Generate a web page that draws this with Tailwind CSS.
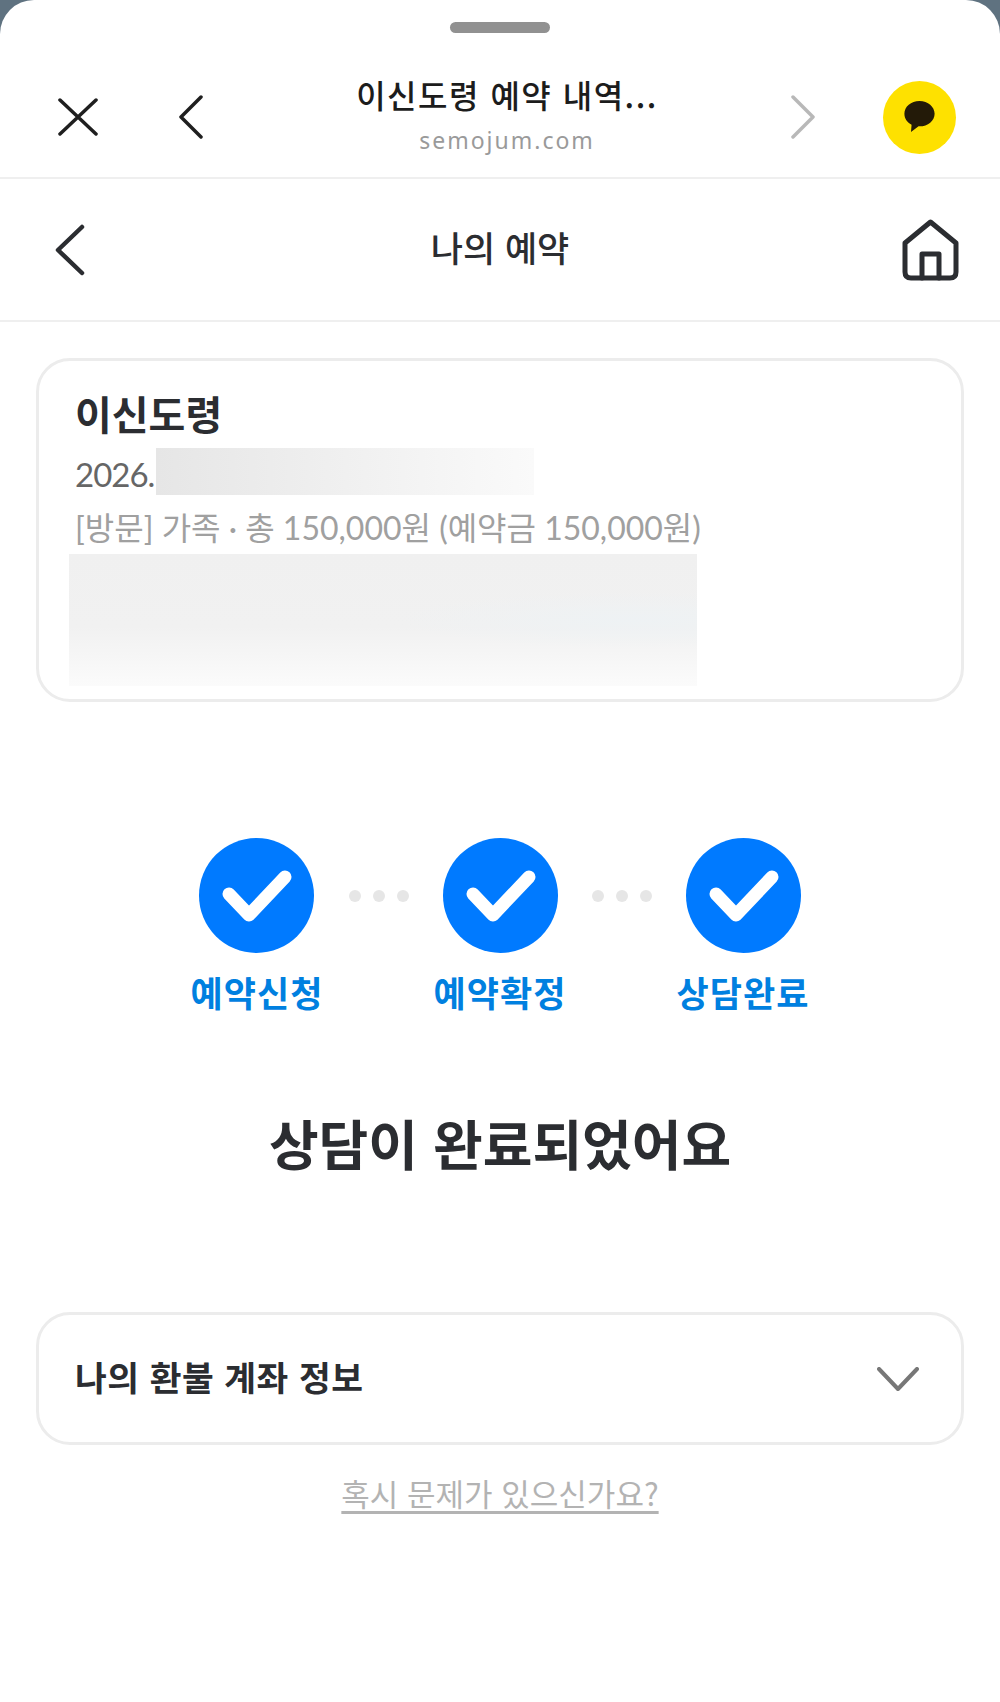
<!DOCTYPE html>
<html lang="ko">
<head>
    <meta charset="UTF-8">
    <title>나의 예약</title>
    <script src="https://cdn.jsdelivr.net/npm/@tailwindcss/browser@4"></script>
</head>
<body class="bg-[#5f7280] font-['Noto_Sans_CJK_KR',sans-serif]">
<div class="w-[1000px] h-[1702px] bg-white rounded-t-[34px] overflow-hidden">
    <!-- 카카오 브라우저 시트 -->
    <div class="h-[177px] pt-[22px]">
        <div class="w-[100px] h-[11px] mx-auto rounded-full bg-[#919191]"></div>
        <div class="flex items-center h-[144px] pt-[24px] pl-[58px] pr-[44px]">
            <svg class="w-[40px] h-[38px]" viewBox="0 0 40 38" fill="none" stroke="#1f1f1f" stroke-width="3.5" stroke-linecap="round"><path d="M2 2 38 36M38 2 2 36"/></svg>
            <svg class="w-[26px] h-[44px] ml-[80px]" viewBox="0 0 26 44" fill="none" stroke="#1f1f1f" stroke-width="3.5" stroke-linecap="round" stroke-linejoin="round"><path d="M23 2 3 22l20 20"/></svg>
            <div class="flex-1 flex flex-col items-center pl-[20px] pb-[6px]">
                <div class="text-[32px] leading-[40px] font-medium text-[#1c1c1c] tracking-[1.500px] whitespace-nowrap">이신도령 예약 내역...</div>
                <div class="text-[23px] leading-[30px] mt-[11px] text-[#9a9a9a] tracking-[2px] font-['Noto_Sans',sans-serif]">semojum.com</div>
            </div>
            <svg class="w-[26px] h-[44px] mr-[67px]" viewBox="0 0 26 44" fill="none" stroke="#b8b8b8" stroke-width="3.5" stroke-linecap="round" stroke-linejoin="round"><path d="m3 2 20 20L3 42"/></svg>
            <div class="w-[73px] h-[73px] rounded-full bg-[#fee100] flex items-center justify-center">
                <svg class="w-[33px] h-[34px]" viewBox="0 0 34 36"><path fill="#231a08" d="M17 1C8 1 1 7 1 14.500c0 5 3 9.300 7.600 11.600L8 34l8-6.100h1c9 0 16-6 16-13.400S26 1 17 1Z"/></svg>
            </div>
        </div>
    </div>
    <!-- 상단 바 -->
    <div class="h-[145px] border-y-2 border-[#efefef] grid grid-cols-[60px_1fr_60px] items-center px-[41px]">
        <svg class="w-[30px] h-[52px] ml-[14px]" viewBox="0 0 30 52" fill="none" stroke="#2b2d31" stroke-width="4.500" stroke-linecap="round" stroke-linejoin="round"><path d="M27 3 3 26l24 23"/></svg>
        <div class="text-center text-[35px] leading-[44px] mb-[6px] font-medium text-[#2b2d31]">나의 예약</div>
        <svg class="w-[57px] h-[62px] justify-self-end" viewBox="0 0 57 62" fill="none" stroke="#2b2d31" stroke-width="5" stroke-linecap="round" stroke-linejoin="round"><path d="M3 24 28.500 3 54 24v29q0 6-6 6H9q-6 0-6-6Z"/><path d="M20 59V35h17v24"/></svg>
    </div>
    <div class="px-[36px] pt-[36px]">
        <!-- 예약 카드 -->
        <div class="h-[344px] rounded-[34px] border-[3px] border-[#ececec] pl-[36px] pt-[26px]">
            <div class="text-[40px] leading-[52px] font-bold text-[#2b2d31]">이신도령</div>
            <div class="flex h-[47px] items-center mt-[9px]">
                <span class="w-[81px] pt-[6px] text-[33px] tracking-[-1px] text-[#666] font-[Lato,'Noto_Sans_CJK_KR',sans-serif]">2026.</span>
                <div class="w-[378px] h-[47px] bg-linear-to-r from-[#e6e6e6] to-[#fafafa]"></div>
            </div>
            <div class="text-[32px] leading-[44px] mt-[11px] text-[#a0a0a0] font-[Lato,'Noto_Sans_CJK_KR',sans-serif] font-normal whitespace-nowrap">[방문] 가족 · 총 150,000원 (예약금 150,000원)</div>
            <div class="w-[628px] h-[132px] -ml-[6px] mt-[4px] bg-[radial-gradient(ellipse_at_90%_50%,#eef2f4,transparent_30%),linear-gradient(to_bottom,#f0f0f0,#f1f1f1_55%,#fbfbfb)]"></div>
        </div>
        <!-- 진행 단계 -->
        <div class="flex items-center justify-center mt-[136px]">
            <div class="w-[115px] h-[115px] rounded-full bg-[#007aff] flex items-center justify-center">
                <svg class="w-[70px] h-[52px]" viewBox="0 0 70 52" fill="none" stroke="#fff" stroke-width="13" stroke-linecap="round" stroke-linejoin="round"><path d="m7 24 20 21L63 7"/></svg>
            </div>
            <div class="w-[129px] flex justify-center gap-[12px]">
                <span class="w-[12px] h-[12px] rounded-full bg-[#e6e6e6]"></span>
                <span class="w-[12px] h-[12px] rounded-full bg-[#e6e6e6]"></span>
                <span class="w-[12px] h-[12px] rounded-full bg-[#e6e6e6]"></span>
            </div>
            <div class="w-[115px] h-[115px] rounded-full bg-[#007aff] flex items-center justify-center">
                <svg class="w-[70px] h-[52px]" viewBox="0 0 70 52" fill="none" stroke="#fff" stroke-width="13" stroke-linecap="round" stroke-linejoin="round"><path d="m7 24 20 21L63 7"/></svg>
            </div>
            <div class="w-[128px] flex justify-center gap-[12px]">
                <span class="w-[12px] h-[12px] rounded-full bg-[#e6e6e6]"></span>
                <span class="w-[12px] h-[12px] rounded-full bg-[#e6e6e6]"></span>
                <span class="w-[12px] h-[12px] rounded-full bg-[#e6e6e6]"></span>
            </div>
            <div class="w-[115px] h-[115px] rounded-full bg-[#007aff] flex items-center justify-center">
                <svg class="w-[70px] h-[52px]" viewBox="0 0 70 52" fill="none" stroke="#fff" stroke-width="13" stroke-linecap="round" stroke-linejoin="round"><path d="m7 24 20 21L63 7"/></svg>
            </div>
        </div>
        <div class="grid grid-cols-3 w-[729px] mx-auto text-center text-[35px] leading-[48px] mt-[15px] font-bold text-[#0080e0] tracking-[1px]">
            <div>예약신청</div>
            <div>예약확정</div>
            <div>상담완료</div>
        </div>
        <h1 class="text-center text-[54px] leading-[72px] mt-[91px] font-bold text-[#2b2d31]">상담이 완료되었어요</h1>
        <!-- 환불 계좌 -->
        <div class="h-[133px] mt-[133px] rounded-[34px] border-[3px] border-[#ececec] flex items-center justify-between pl-[36px] pr-[42px]">
            <div class="text-[34.500px] leading-[46px] mb-[5px] font-bold text-[#2b2d31] tracking-[0.500px]">나의 환불 계좌 정보</div>
            <svg class="w-[42px] h-[24px]" viewBox="0 0 42 24" fill="none" stroke="#777" stroke-width="4" stroke-linecap="round" stroke-linejoin="round"><path d="m2 2 19 20L40 2"/></svg>
        </div>
        <div class="text-center mt-[26px]">
            <span class="text-[31px] leading-[44px] text-[#b3b3b3] underline underline-offset-[5px] font-normal">혹시 문제가 있으신가요?</span>
        </div>
    </div>
</div>
</body>
</html>
